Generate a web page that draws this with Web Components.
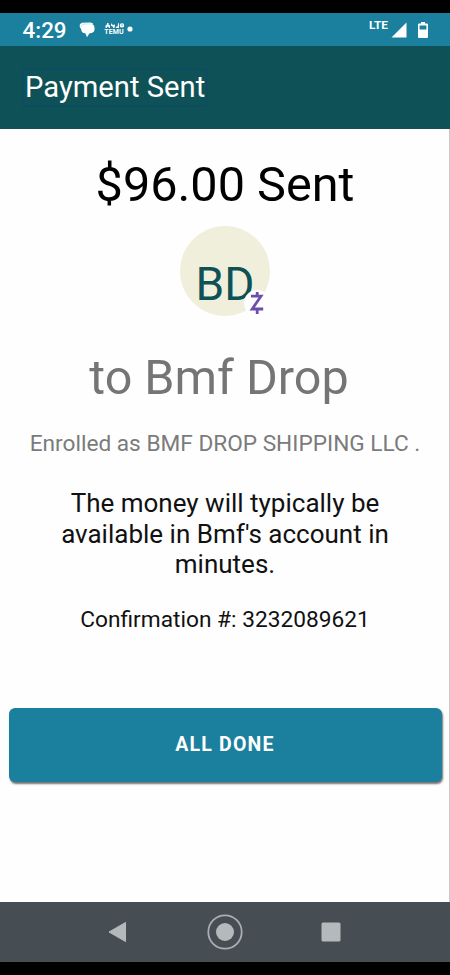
<!DOCTYPE html>
<html lang="en">
<head>
<meta charset="utf-8">
<meta name="viewport" content="width=device-width, initial-scale=1">
<title>Payment Sent</title>
<style>
    body {
        margin: 0;
        background: #000;
        font-family: Roboto, "Liberation Sans", sans-serif;
    }
</style>
</head>
<body>
<payment-screen>
    <status-bar slot="top" time="4:29"></status-bar>
    <app-header slot="top">Payment Sent</app-header>
    <payment-receipt>
        <span slot="amount">$96.00 Sent</span>
        <contact-avatar slot="avatar">BD</contact-avatar>
        <span slot="name">to Bmf Drop</span>
        <span slot="enrolled">Enrolled as BMF DROP SHIPPING LLC .</span>
        <span slot="message">The money will typically be<br>available in Bmf's account in<br>minutes.</span>
        <span slot="confirmation">Confirmation #: 3232089621</span>
    </payment-receipt>
    <done-button>ALL DONE</done-button>
    <system-nav slot="bottom"></system-nav>
</payment-screen>

<script>
class PaymentScreen extends HTMLElement {
    constructor() {
        super();
        this.attachShadow({ mode: 'open' });
    }

    connectedCallback() {
        this.shadowRoot.innerHTML = `
            <style>
                :host {
                    display: flex;
                    flex-direction: column;
                    width: 450px;
                    height: 975px;
                    padding: 13px 0;
                    box-sizing: border-box;
                    background: #000;
                    overflow: hidden;
                }

                main {
                    flex: 1;
                    background: #fefefe;
                    border-right: 1px solid #c9cacb;
                }
            </style>
            <slot name="top"></slot>
            <main><slot></slot></main>
            <slot name="bottom"></slot>
        `;
    }
}

class StatusBar extends HTMLElement {
    constructor() {
        super();
        this.attachShadow({ mode: 'open' });
    }

    connectedCallback() {
        const time = this.getAttribute('time') || '';

        this.shadowRoot.innerHTML = `
            <style>
                :host {
                    display: flex;
                    align-items: center;
                    height: 33px;
                    padding: 0 22px 0 22.5px;
                    box-sizing: border-box;
                    background: #1a809e;
                    color: #fff;
                }

                .time {
                    width: 56px;
                    font-size: 22.4px;
                    font-weight: 500;
                    line-height: 34px;
                    padding-top: 1px;
                }

                .temu {
                    display: flex;
                    flex-direction: column;
                    align-items: center;
                    width: 20px;
                    margin: 0 2.5px 0 9.5px;
                }

                .temu span {
                    font-size: 7px;
                    font-weight: 700;
                    line-height: 8px;
                    letter-spacing: 0.1px;
                }

                .dot {
                    margin-bottom: 1px;
                }

                .spacer {
                    flex: 1;
                }

                .lte {
                    font-size: 11.8px;
                    font-weight: 700;
                    line-height: 12px;
                    margin: 0 3px 9px 0;
                }

                .battery {
                    margin-left: 11px;
                }

                svg {
                    display: block;
                }
            </style>
            <div class="time">${time}</div>
            <svg width="16" height="16" viewBox="0 0 16 16">
                <path d="M5.500 1.600h5Q15.600 1.600 15.600 6.500T10.500 11.300L8 15.200 6.300 11.300Q2.400 11 2.200 7.500L.6 4.200Q.2 2 2.800.8L11 .4Q13.500.3 14.300 2z" fill="#fff"/>
                <path d="M2 5Q2.600 2.300 5.500 2h6" fill="none" stroke="#1a809e" stroke-opacity=".35" stroke-width=".6"/>
            </svg>
            <div class="temu">
                <svg width="19" height="5" viewBox="0 0 19 5">
                    <path d="M2 0h1.500v1.500L5 2.500V5H3.700V3.700H2V5H.5V2.500l1.500-1zM6 .3l2 1.700 2-.4v1.200L9.300 5H8V3.700L6 2.700zM10.800 4l2-1L13 .3h1V5h-3.200z" fill="#fff"/>
                    <circle cx="17" cy="2.400" r="2.200" fill="#fff"/>
                    <path d="M16 2h2" stroke="#1a809e" stroke-width=".6"/>
                </svg>
                <span>TEMU</span>
            </div>
            <svg class="dot" width="6" height="6" viewBox="0 0 6 6"><circle cx="3" cy="3" r="2.600" fill="#fff"/></svg>
            <div class="spacer"></div>
            <div class="lte">LTE</div>
            <svg width="16" height="16" viewBox="0 0 16 16"><path d="M15.500.5v15H.5z" fill="#fff"/></svg>
            <svg class="battery" width="10" height="16" viewBox="0 0 10 16">
                <path d="M3 0h4v1.500h2q1 0 1 1V15q0 1-1 1H1q-1 0-1-1V2.500q0-1 1-1h2z" fill="#fff"/>
                <path d="M1.600 3.500h6.800v4H1.600z" fill="#1a809e"/>
            </svg>
        `;
    }
}

class AppHeader extends HTMLElement {
    constructor() {
        super();
        this.attachShadow({ mode: 'open' });
    }

    connectedCallback() {
        this.shadowRoot.innerHTML = `
            <style>
                :host {
                    display: flex;
                    align-items: center;
                    height: 83px;
                    padding-left: 22px;
                    box-sizing: border-box;
                    background: #0e5257;
                    color: #fff;
                }

                h1 {
                    margin: 0;
                    padding: 0 0 0 1px;
                    width: 181px;
                    border: 2px solid #0e4c62;
                    font-size: 29.2px;
                    font-weight: 400;
                    line-height: 35px;
                    white-space: nowrap;
                }
            </style>
            <h1><slot></slot></h1>
        `;
    }
}

class PaymentReceipt extends HTMLElement {
    constructor() {
        super();
        this.attachShadow({ mode: 'open' });
    }

    connectedCallback() {
        this.shadowRoot.innerHTML = `
            <style>
                :host {
                    display: flex;
                    flex-direction: column;
                    align-items: center;
                    width: 450px;
                    height: 579px;
                    padding-top: 28px;
                    box-sizing: border-box;
                    text-align: center;
                    white-space: nowrap;
                    color: #111;
                }

                .amount {
                    font-size: 48.6px;
                    line-height: 56px;
                    color: #000;
                }

                .avatar {
                    margin-top: 13px;
                }

                .name {
                    margin-top: 33px;
                    padding-right: 12px;
                    font-size: 48.5px;
                    line-height: 58px;
                    color: #757575;
                }

                .enrolled {
                    margin-top: 23px;
                    font-size: 22.65px;
                    line-height: 28px;
                    color: #7b7b7b;
                }

                .message {
                    margin-top: 30px;
                    font-size: 26px;
                    line-height: 30.7px;
                }

                .confirmation {
                    margin-top: 26px;
                    font-size: 22.7px;
                    line-height: 28px;
                }
            </style>
            <div class="amount"><slot name="amount"></slot></div>
            <div class="avatar"><slot name="avatar"></slot></div>
            <div class="name"><slot name="name"></slot></div>
            <div class="enrolled"><slot name="enrolled"></slot></div>
            <div class="message"><slot name="message"></slot></div>
            <div class="confirmation"><slot name="confirmation"></slot></div>
        `;
    }
}

class ContactAvatar extends HTMLElement {
    constructor() {
        super();
        this.attachShadow({ mode: 'open' });
    }

    connectedCallback() {
        this.shadowRoot.innerHTML = `
            <style>
                :host {
                    display: block;
                    position: relative;
                    width: 90px;
                    height: 90px;
                    border-radius: 50%;
                    background: #f0efdc;
                    color: #0e5257;
                }

                .initials {
                    padding-top: 26px;
                    font-size: 46px;
                    line-height: 64px;
                }

                /* Zelle badge sits over the lower right of the circle */
                svg {
                    position: absolute;
                    left: 63px;
                    top: 63px;
                }
            </style>
            <div class="initials"><slot></slot></div>
            <svg width="28" height="28" viewBox="0 0 28 28">
                <circle cx="14" cy="14" r="13" fill="#fefefe"/>
                <path d="M8 7.200h10L9.200 20h11M14.200 3v4.200M14.200 20v5" fill="none" stroke="#6b4fa8" stroke-width="2.800"/>
            </svg>
        `;
    }
}

class DoneButton extends HTMLElement {
    constructor() {
        super();
        this.attachShadow({ mode: 'open' });
    }

    connectedCallback() {
        this.shadowRoot.innerHTML = `
            <style>
                :host {
                    display: block;
                    padding: 0 7px 0 9px;
                }

                button {
                    display: block;
                    width: 100%;
                    height: 74px;
                    padding: 0 1px 1px 0;
                    border: 0;
                    border-radius: 6px;
                    background: #1a809e;
                    box-shadow: 1px 2px 2px rgba(0, 0, 0, 0.55);
                    color: #fff;
                    font-family: inherit;
                    font-size: 19.5px;
                    font-weight: 700;
                    letter-spacing: 1.2px;
                }
            </style>
            <button type="button"><slot></slot></button>
        `;
    }
}

class SystemNav extends HTMLElement {
    constructor() {
        super();
        this.attachShadow({ mode: 'open' });
    }

    connectedCallback() {
        this.shadowRoot.innerHTML = `
            <style>
                :host {
                    display: flex;
                    justify-content: center;
                    align-items: center;
                    gap: 70px;
                    height: 60px;
                    background: #464d53;
                }

                svg {
                    display: block;
                }
            </style>
            <svg width="36" height="36" viewBox="0 0 36 36"><path d="M24.500 8.500v19L8 18z" fill="#b4b9bb" stroke="#b4b9bb" stroke-width="1" stroke-linejoin="round"/></svg>
            <svg width="36" height="36" viewBox="0 0 36 36">
                <circle cx="18" cy="18" r="16.700" fill="none" stroke="#a9aeb2" stroke-width="1.800"/>
                <circle cx="18" cy="18" r="9" fill="#b4b9bb"/>
            </svg>
            <svg width="36" height="36" viewBox="0 0 36 36"><rect x="8.500" y="8.500" width="19" height="19" rx="1.500" fill="#b4b9bb"/></svg>
        `;
    }
}

customElements.define('payment-screen', PaymentScreen);
customElements.define('status-bar', StatusBar);
customElements.define('app-header', AppHeader);
customElements.define('payment-receipt', PaymentReceipt);
customElements.define('contact-avatar', ContactAvatar);
customElements.define('done-button', DoneButton);
customElements.define('system-nav', SystemNav);
</script>
</body>
</html>
